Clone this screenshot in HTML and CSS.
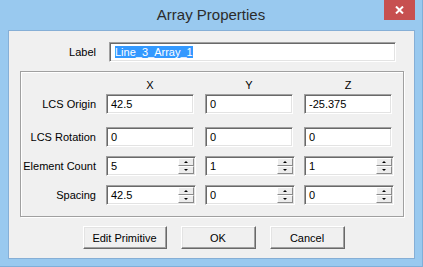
FILE: index.html
```html
<!DOCTYPE html>
<html>
<head>
    <title>Array Properties</title>
    <link rel="stylesheet" href="styles.css">
</head>
<body>
    <div class="window">
        <div class="titlebar">
            <span class="title">Array Properties</span>
            <button class="close" type="button">
                <svg width="9" height="8" viewBox="0 0 9 8">
                    <path d="M1 0.5 L8 7.5 M8 0.5 L1 7.5" stroke="#fff" stroke-width="2"/>
                </svg>
            </button>
        </div>
        <div class="client">
            <div class="label-row">
                <label>Label</label>
                <div class="field label-field"><span class="sel">Line_3_Array_1</span></div>
            </div>

            <div class="group">
                <div class="row head">
                    <span></span>
                    <span>X</span>
                    <span>Y</span>
                    <span>Z</span>
                </div>
                <div class="row first">
                    <label>LCS Origin</label>
                    <div class="field">42.5</div>
                    <div class="field">0</div>
                    <div class="field">-25.375</div>
                </div>
                <div class="row second">
                    <label>LCS Rotation</label>
                    <div class="field">0</div>
                    <div class="field">0</div>
                    <div class="field">0</div>
                </div>
                <div class="row">
                    <label>Element Count</label>
                    <div class="field spin"><span class="val">5</span><span class="arrows"><i class="up"></i><i class="down"></i></span></div>
                    <div class="field spin"><span class="val">1</span><span class="arrows"><i class="up"></i><i class="down"></i></span></div>
                    <div class="field spin"><span class="val">1</span><span class="arrows"><i class="up"></i><i class="down"></i></span></div>
                </div>
                <div class="row">
                    <label>Spacing</label>
                    <div class="field spin"><span class="val">42.5</span><span class="arrows"><i class="up"></i><i class="down"></i></span></div>
                    <div class="field spin"><span class="val">0</span><span class="arrows"><i class="up"></i><i class="down"></i></span></div>
                    <div class="field spin"><span class="val">0</span><span class="arrows"><i class="up"></i><i class="down"></i></span></div>
                </div>
            </div>

            <div class="buttons">
                <button type="button" class="btn wide">Edit Primitive</button>
                <button type="button" class="btn">OK</button>
                <button type="button" class="btn">Cancel</button>
            </div>
        </div>
    </div>
</body>
</html>
```

FILE: styles.css
```css
body {
    margin: 0;
    font-family: "Liberation Sans", Arial, sans-serif;
    font-size: 11px;
    color: #000;
}

.window {
    width: 423px;
    height: 267px;
    box-sizing: border-box;
    background-color: #99c9ef;
    border-right: 1px solid #7fafd9;
    border-bottom: 1px solid #7fafd9;
    display: flex;
    flex-direction: column;
}

.titlebar {
    height: 30px;
    display: grid;
    grid-template-columns: 1fr auto 1fr;
    align-items: start;
}

.title {
    grid-column: 2;
    font-size: 15px;
    line-height: 30px;
    color: #2b2b2b;
}

.close {
    grid-column: 3;
    justify-self: end;
    width: 31px;
    height: 20px;
    margin-right: 7px;
    padding: 0;
    border: 0;
    background-color: #c75050;
    display: flex;
    align-items: center;
    justify-content: center;
}

.client {
    margin: 0 7px 0 8px;
    height: 229px;
    box-sizing: border-box;
    background-color: #f0f0f0;
    border: 1px solid #86afd6;
    padding-top: 11px;
}

.label-row {
    display: flex;
    align-items: center;
}

.label-row label {
    width: 87px;
    margin-right: 13px;
    text-align: right;
}

.field {
    box-sizing: border-box;
    height: 20px;
    background-color: #fff;
    border: 1px solid;
    border-color: #a0a0a0 #fff #fff #a0a0a0;
    box-shadow: inset 1px 1px 0 #696969, inset -1px -1px 0 #e3e3e3;
    padding: 0 4px;
    line-height: 18px;
    width: 88px;
}

.label-field {
    width: 287px;
    padding-left: 5px;
}

.sel {
    background-color: #3399ff;
    color: #fff;
}

.group {
    margin: 9px 0 0 11px;
    width: 384px;
    height: 146px;
    box-sizing: border-box;
    border: 1px solid #a0a0a0;
    box-shadow: 1px 1px 0 #fff, inset 1px 1px 0 #fff;
    padding-top: 6px;
}

.row {
    display: grid;
    grid-template-columns: 85px 99px 99px 90px;
    align-items: center;
    height: 20px;
    margin-top: 9px;
}

.row label {
    text-align: right;
    padding-right: 10px;
}

.row.head {
    height: 14px;
    margin-top: 0;
}

.row.head span {
    width: 88px;
    text-align: center;
}

.row.first {
    margin-top: 2px;
}

.row.second {
    margin-top: 13px;
}

.spin {
    width: 90px;
    display: flex;
    align-items: center;
    padding-right: 1px;
}

.spin .val {
    flex: 1;
}

.arrows {
    width: 16px;
    height: 16px;
    display: flex;
    flex-direction: column;
}

.arrows i {
    flex: 1;
    box-sizing: border-box;
    border: 1px solid;
    border-color: #fff #8a8a8a #8a8a8a #fff;
    background-color: #ececec;
    display: flex;
    align-items: center;
    justify-content: center;
}

.arrows i::after {
    content: "";
    border-left: 2px solid transparent;
    border-right: 2px solid transparent;
}

.arrows .up::after {
    border-bottom: 2px solid #000;
}

.arrows .down::after {
    border-top: 2px solid #000;
}

.buttons {
    display: flex;
    justify-content: center;
    gap: 14px;
    margin-top: 9px;
    padding-left: 4px;
}

.btn {
    width: 75px;
    height: 23px;
    padding: 0;
    font: inherit;
    color: #000;
    background-color: #f0f0f0;
    border: 1px solid;
    border-color: #fff #696969 #696969 #fff;
    box-shadow: inset -1px -1px 0 #a0a0a0, inset 1px 1px 0 #e3e3e3;
}

.btn.wide {
    width: 84px;
}
```
